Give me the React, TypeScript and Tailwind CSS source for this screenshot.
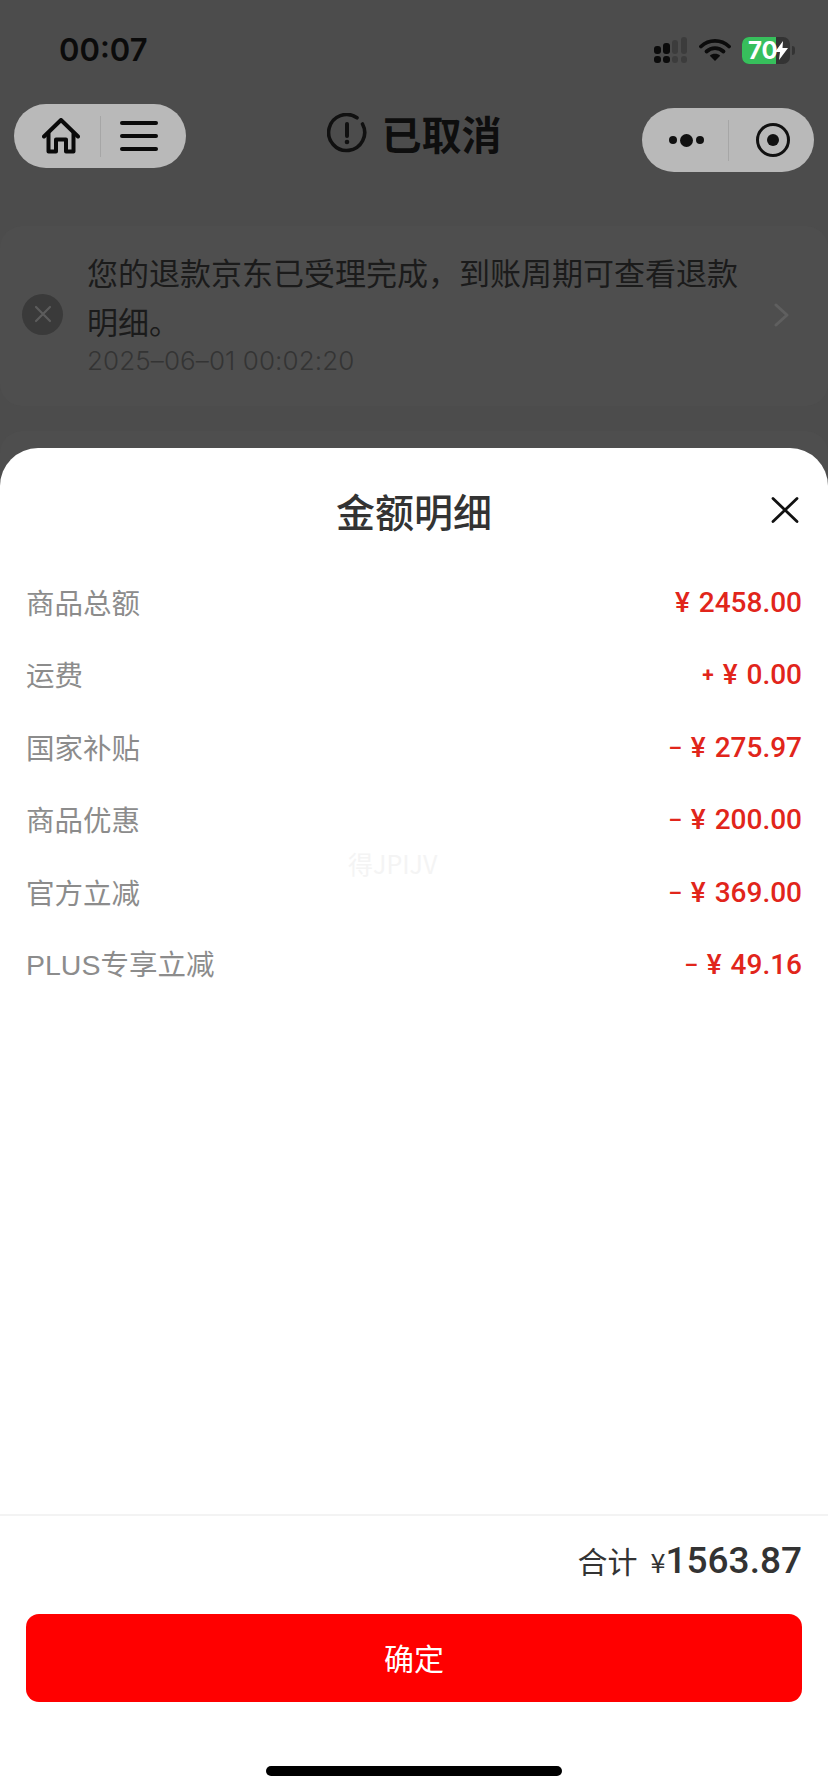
const sans = "[font-family:'Noto_Sans_CJK_SC','Liberation_Sans',sans-serif]";
const inter = "[font-family:'Inter','Liberation_Sans',sans-serif]";
const num = "[font-family:'Roboto','Noto_Sans_CJK_SC',sans-serif]";
const latin = "[font-family:'Liberation_Sans',sans-serif]";

const rows = [
  ["商品总额", "", "¥ 2458.00"],
  ["运费", "+", "¥ 0.00"],
  ["国家补贴", "\u2013", "¥ 275.97"],
  ["商品优惠", "\u2013", "¥ 200.00"],
  ["官方立减", "\u2013", "¥ 369.00"],
];

function Signal() {
  return (
    <svg width="34" height="27" viewBox="0 0 34 27">
      <rect x="0" y="19" width="7" height="7" rx="3" fill="#0b0b0b" />
      <rect x="9" y="19" width="7" height="7" rx="3" fill="#0b0b0b" />
      <rect x="18" y="19" width="6" height="7" rx="3" fill="#3c3c3c" />
      <rect x="27" y="19" width="6" height="7" rx="3" fill="#3c3c3c" />
      <rect x="0" y="9" width="7" height="8" rx="3" fill="#0b0b0b" />
      <rect x="9" y="6" width="7" height="11" rx="3" fill="#0b0b0b" />
      <rect x="18" y="3" width="6" height="14" rx="3" fill="#3c3c3c" />
      <rect x="27" y="0" width="6" height="17" rx="3" fill="#3c3c3c" />
    </svg>
  );
}

function Wifi() {
  return (
    <svg width="32" height="25" viewBox="0 0 32 25" fill="none">
      <path d="M2 9.5C9.8 2 22.2 2 30 9.5" stroke="#0b0b0b" strokeWidth="3.8" strokeLinecap="round" />
      <path d="M7.5 14.5C12.3 10 19.7 10 24.5 14.5" stroke="#0b0b0b" strokeWidth="3.8" strokeLinecap="round" />
      <path d="M16 24L10.8 18.8C13.6 16.2 18.4 16.2 21.2 18.8Z" fill="#0b0b0b" />
    </svg>
  );
}

function Battery() {
  return (
    <div className="flex items-center">
      <div className="relative flex h-[27px] w-[48px] overflow-hidden rounded-[7px] bg-[#333333]">
        <div className="h-full w-[34px] bg-[#37bf5c]" />
        <span className={`absolute left-[6px] top-0 text-[24px] leading-[27px] font-bold text-white ${inter}`}>70</span>
        <svg className="absolute left-[33px] top-[4px]" width="13" height="19" viewBox="0 0 13 19">
          <path d="M8 0L0 11H5L4 19L13 7H7.5Z" fill="#ffffff" />
        </svg>
      </div>
      <div className="ml-[2px] h-[9px] w-[3px] rounded-r-full bg-[#333333]" />
    </div>
  );
}

function HomeIcon() {
  return (
    <svg width="38" height="36" viewBox="0 0 38 36" fill="none" stroke="#0a0a0a" strokeWidth="4" strokeLinejoin="round" strokeLinecap="round">
      <path d="M2 18.5L19 2L36 18.5" />
      <path d="M6.5 15.5V33.5H14V21.5H24V33.5H31.5V15.5" />
    </svg>
  );
}

function Menu() {
  return (
    <div className="flex h-[30px] w-[38px] flex-col justify-between">
      <div className="h-[4px] rounded-full bg-[#0a0a0a]" />
      <div className="h-[4px] rounded-full bg-[#0a0a0a]" />
      <div className="h-[4px] rounded-full bg-[#0a0a0a]" />
    </div>
  );
}

function Alert() {
  return (
    <svg width="40" height="40" viewBox="0 0 40 40" fill="none">
      <path d="M30 4.8A18 18 0 1 0 35.5 11" stroke="#101010" strokeWidth="3.6" strokeLinecap="round" />
      <path d="M20 11V23" stroke="#101010" strokeWidth="4" strokeLinecap="round" />
      <circle cx="20" cy="29" r="2.3" fill="#101010" />
    </svg>
  );
}

function Value({ sign, text }: { sign: string; text: string }) {
  return (
    <span className={`flex items-center gap-[9px] text-[28px] leading-[40px] font-medium [word-spacing:2px] text-[#e1251b] ${num}`}>
      {sign && <span className="text-[21px] font-bold">{sign}</span>}
      <span>{text}</span>
    </span>
  );
}

export default function App() {
  return (
    <div className={`relative h-[1792px] w-[828px] overflow-hidden bg-[#4c4c4c] ${sans}`}>
      <div className="flex h-[104px] items-start justify-between pl-[59px] pr-[33px] pt-[32px]">
        <span className={`text-[31px] leading-[36px] font-semibold text-[#0b0b0b] ${inter}`}>00:07</span>
        <div className="mt-[5px] flex items-start gap-[11px]">
          <Signal />
          <Wifi />
          <Battery />
        </div>
      </div>

      <div className="flex items-start justify-between pl-[14px] pr-[14px]">
        <div className="flex h-[64px] w-[172px] items-center rounded-full bg-[#b9b9b9]">
          <div className="flex w-[86px] justify-center pl-[8px]"><HomeIcon /></div>
          <div className="h-[41px] w-px bg-[#a6a6a6]" />
          <div className="flex flex-1 justify-center pr-[10px]"><Menu /></div>
        </div>
        <div className="flex h-[60px] items-center gap-[15px] pb-[2px]">
          <Alert />
          <span className="text-[40px] leading-[48px] font-bold text-[#0e0e0e]">已取消</span>
        </div>
        <div className="mt-[4px] flex h-[64px] w-[172px] items-center rounded-full bg-[#b9b9b9]">
          <div className="flex w-[86px] items-center justify-center gap-[3px] pl-[2px]">
            <div className="h-[8px] w-[8px] rounded-full bg-[#111111]" />
            <div className="h-[13px] w-[13px] rounded-full bg-[#111111]" />
            <div className="h-[8px] w-[8px] rounded-full bg-[#111111]" />
          </div>
          <div className="h-[41px] w-px bg-[#a6a6a6]" />
          <div className="flex flex-1 justify-center pl-[2px]">
            <div className="flex h-[34px] w-[34px] items-center justify-center rounded-full border-[3.5px] border-[#111111]">
              <div className="h-[12px] w-[12px] rounded-full bg-[#111111]" />
            </div>
          </div>
        </div>
      </div>

      <div className="mt-[54px] flex h-[180px] items-center rounded-[22px] bg-[#4e4e4e] pl-[22px] pr-[39px]">
        <div className="mb-[4px] flex h-[41px] w-[41px] items-center justify-center rounded-full bg-[#3a3a3a]">
          <svg width="20" height="20" viewBox="0 0 20 20" stroke="#5c5c5c" strokeWidth="2.2" strokeLinecap="round">
            <path d="M3 3L17 17M17 3L3 17" />
          </svg>
        </div>
        <div className="ml-[24px] w-[655px] pb-[10px]">
          <p className="text-[31px] leading-[49px] text-[#1b1b1b]">{"您的退款京东已受理完成\uFF0C到账周期可查看退款明细\u3002"}</p>
          <p className={`mt-[2px] text-[26px] leading-[28px] font-light tracking-[0.1px] text-[#343434] ${inter}`}>2025–06–01 00:02:20</p>
        </div>
        <svg className="ml-auto mb-[2px]" width="15" height="24" viewBox="0 0 15 24" fill="none" stroke="#5f5f5f" strokeWidth="3" strokeLinecap="round" strokeLinejoin="round">
          <path d="M2 2L13 12L2 22" />
        </svg>
      </div>
      <div className="mt-[25px] h-[100px] rounded-[22px] bg-[#4e4e4e]" />

      <div className="absolute inset-x-0 bottom-0 flex h-[1344px] flex-col rounded-t-[38px] bg-white">
        <div className="relative flex h-[130px] items-start justify-center pt-[38px]">
          <h2 className="text-[39px] leading-[48px] font-medium text-[#333333]">金额明细</h2>
          <svg className="absolute right-[29px] top-[49px]" width="28" height="26" viewBox="0 0 28 26" stroke="#111111" strokeWidth="2.8" strokeLinecap="round">
            <path d="M2 1.5L26 24.5M26 1.5L2 24.5" />
          </svg>
        </div>
        <div className="flex flex-col gap-[32.4px] pl-[26px] pr-[26px] pt-[5px]">
          {rows.map(([label, sign, value]) => (
            <div key={label} className="flex h-[40px] items-center justify-between">
              <span className="-mt-[2px] text-[28.5px] leading-[40px] text-[#8c8c8c]">{label}</span>
              <Value sign={sign} text={value} />
            </div>
          ))}
          <div className="flex h-[40px] items-center justify-between">
            <span className="-mt-[2px] text-[28.5px] leading-[40px] text-[#8c8c8c]">
              <span className={latin}>PLUS</span>专享立减
            </span>
            <Value sign={"\u2013"} text="¥ 49.16" />
          </div>
        </div>
        <div className="relative flex-1">
          <span className="absolute left-[348px] top-[-140px] text-[25px] leading-[36px] text-[#f4f4f4]">得JPIJV</span>
        </div>
        <div className="flex justify-end border-t-2 border-[#f3f3f3] pl-[28px] pr-[26px] pt-[20px]">
          <div className="flex items-baseline text-[#333333]">
            <span className="text-[30px] leading-[48px]">合计</span>
            <span className="ml-[13px] text-[27px] leading-[48px]">¥</span>
            <span className={`text-[37px] leading-[48px] font-medium ${num}`}>1563.87</span>
          </div>
        </div>
        <div className="px-[26px] pt-[28px]">
          <button className="flex h-[88px] w-full items-center justify-center rounded-[13px] bg-[#ff0000] pb-[2px] text-[30px] text-white">确定</button>
        </div>
        <div className="flex justify-center pb-[16px] pt-[64px]">
          <div className="h-[10px] w-[296px] rounded-full bg-black" />
        </div>
      </div>
    </div>
  );
}
